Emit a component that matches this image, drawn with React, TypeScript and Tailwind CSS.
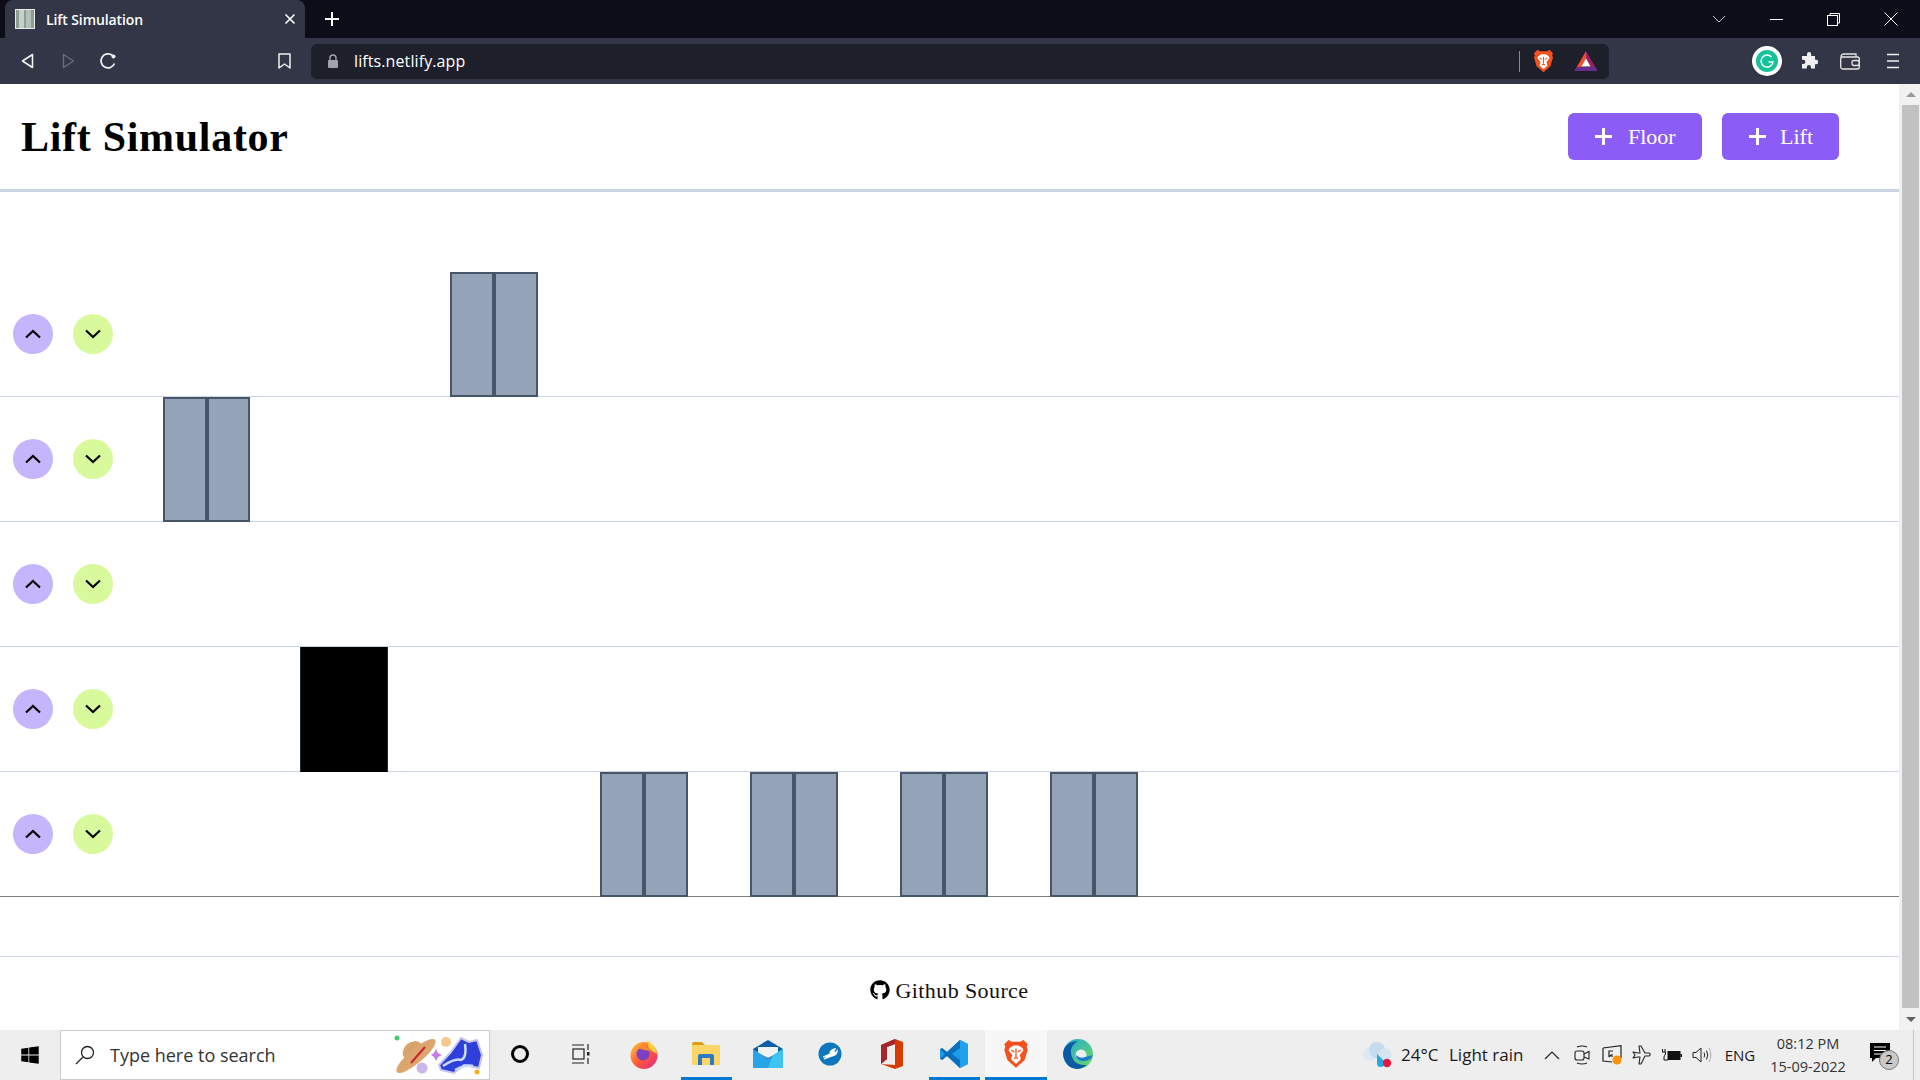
import type { ReactNode } from 'react';
import { FaGithub, FaWindows } from 'react-icons/fa';

const uiFont = "font-['Open_Sans',sans-serif]";
const serif = "font-['Liberation_Serif',serif]";

function Chevron({ up }: { up?: boolean }) {
  return (
    <svg width="16" height="10" viewBox="0 0 16 10" fill="none" stroke="#000" strokeWidth="2.2">
      <path d={up ? 'M1 8.5 L8 2 L15 8.5' : 'M1 1.5 L8 8 L15 1.5'} />
    </svg>
  );
}

function FloorButtons() {
  return (
    <div className="flex h-[124px] items-center gap-[20px] pl-[13px]">
      <button className="flex h-10 w-10 items-center justify-center rounded-full bg-[#c4b5fd]">
        <Chevron up />
      </button>
      <button className="flex h-10 w-10 items-center justify-center rounded-full bg-[#d9f99d]">
        <Chevron />
      </button>
    </div>
  );
}

function Lift({ className = 'w-[88px]' }: { className?: string }) {
  return (
    <div className={`flex h-[125px] shrink-0 ${className}`}>
      <div className="w-1/2 border-2 border-[#475569] bg-[#94a3b8]" />
      <div className="w-1/2 border-2 border-[#475569] bg-[#94a3b8]" />
    </div>
  );
}

function BraveIcon({ size = 22 }: { size?: number }) {
  return (
    <svg width={size} height={size * 1.15} viewBox="0 0 24 28">
      <path d="M5 1 L8 2.5 H16 L19 1 L23 5 L22 7.5 L23 10 L20 20 L12 27 L4 20 L1 10 L2 7.5 L1 5 Z" fill="#f4511e" />
      <path d="M6 8.5 L9.5 6 H14.5 L18 8.5 L19 10.5 L15.5 15 L16.5 19 L12 23.5 L7.5 19 L8.5 15 L5 10.5 Z" fill="#fff" />
      <path d="M7.5 10.5 L10.5 12 M16.5 10.5 L13.5 12 M12 9 V17 M10 18 H14" stroke="#f4511e" strokeWidth="1.2" fill="none" />
    </svg>
  );
}

function BatIcon() {
  return (
    <svg width="24" height="21" viewBox="0 0 24 21">
      <path d="M12 0 L0.5 20 L12 13 Z" fill="#ef4f2c" />
      <path d="M12 0 L23.5 20 L12 13 Z" fill="#9e1f63" />
      <path d="M0.5 20 L3 16 H21 L23.5 20 Z" fill="#662d91" />
      <path d="M12 7.5 L16.5 15.5 H7.5 Z" fill="#fff" />
    </svg>
  );
}

function TabBar() {
  return (
    <div className="flex h-[38px] bg-[#0c0d18] pl-[5px] text-white">
      <div className="flex w-[300px] items-center rounded-t-lg bg-[#333646] pl-[10px]">
        <svg width="20" height="20" viewBox="0 0 20 20">
          <rect width="20" height="20" fill="#e8ece8" />
          <rect x="1" y="1" width="18" height="18" fill="#8e9c94" />
          <rect x="4" y="1" width="5" height="18" fill="#c5d0c8" />
          <rect x="11" y="1" width="5" height="18" fill="#b4c0b8" />
        </svg>
        <span className={`ml-[11px] text-[14px] font-semibold tracking-[-0.1px] whitespace-nowrap ${uiFont}`}>Lift Simulation</span>
        <svg className="ml-auto mr-[9px]" width="12" height="12" viewBox="0 0 12 12" stroke="#fff" strokeWidth="1.6">
          <path d="M1.5 1.5 L10.5 10.5 M10.5 1.5 L1.5 10.5" />
        </svg>
      </div>
      <div className="flex w-[54px] items-center justify-center">
        <svg width="16" height="16" viewBox="0 0 16 16" stroke="#fff" strokeWidth="2">
          <path d="M8 1 V15 M1 8 H15" />
        </svg>
      </div>
      <div className="ml-auto flex">
        <div className="flex w-[57.5px] items-center justify-center">
          <svg width="14" height="8" viewBox="0 0 14 8" fill="none" stroke="#c8c8c8">
            <path d="M1 1 L7 7 L13 1" />
          </svg>
        </div>
        <div className="flex w-[57.5px] items-center justify-center">
          <div className="h-px w-[13px] bg-white" />
        </div>
        <div className="flex w-[57.5px] items-center justify-center">
          <svg width="13" height="13" viewBox="0 0 13 13" fill="none" stroke="#fff">
            <path d="M3 2.5 V0.5 H12.5 V10 H10.5" />
            <rect x="0.5" y="2.5" width="10" height="10" />
          </svg>
        </div>
        <div className="flex w-[57.5px] items-center justify-center">
          <svg width="14" height="14" viewBox="0 0 14 14" stroke="#fff" strokeWidth="1">
            <path d="M0.5 0.5 L13.5 13.5 M13.5 0.5 L0.5 13.5" />
          </svg>
        </div>
      </div>
    </div>
  );
}

function ToolSlot({ children }: { children: ReactNode }) {
  return <div className="flex h-full w-10 items-center justify-center">{children}</div>;
}

function Toolbar() {
  return (
    <div className="flex h-[46px] items-center bg-[#333646] pl-[7px]">
      <ToolSlot>
        <svg width="13" height="16" viewBox="0 0 13 16" fill="none" stroke="#f2f2f2" strokeWidth="1.6" strokeLinejoin="round">
          <path d="M11.5 1.5 V14.5 L1.5 8 Z" />
        </svg>
      </ToolSlot>
      <div className="ml-[1px]">
        <ToolSlot>
          <svg width="13" height="16" viewBox="0 0 13 16" fill="none" stroke="#6b6d7a" strokeWidth="1.4" strokeLinejoin="round">
            <path d="M1.5 1.5 V14.5 L11.5 8 Z" />
          </svg>
        </ToolSlot>
      </div>
      <ToolSlot>
        <svg width="18" height="18" viewBox="0 0 18 18" fill="none" stroke="#f2f2f2" strokeWidth="1.7">
          <path d="M15.5 11.5 A7 7 0 1 1 13.5 3.5" />
          <circle cx="14.5" cy="4.5" r="2" fill="#f2f2f2" stroke="none" />
        </svg>
      </ToolSlot>
      <div className="ml-[136px]">
        <ToolSlot>
          <svg width="13" height="16" viewBox="0 0 13 16" fill="none" stroke="#f2f2f2" strokeWidth="1.5" strokeLinejoin="round">
            <path d="M1 1 H12 V15 L6.5 11 L1 15 Z" />
          </svg>
        </ToolSlot>
      </div>
      <div className="ml-[7px] flex h-[35px] w-[1298px] items-center rounded-md bg-[#1d1f2a] pl-[16px] pr-[11px]">
        <svg width="12" height="14" viewBox="0 0 12 14">
          <path d="M3 6 V4 A3 3 0 0 1 9 4 V6" fill="none" stroke="#a0a2ad" strokeWidth="1.4" />
          <rect x="1" y="6" width="10" height="8" rx="1" fill="#a0a2ad" />
        </svg>
        <span className={`ml-[15px] text-[16px] tracking-[0.1px] whitespace-nowrap text-white ${uiFont}`}>lifts.netlify.app</span>
        <div className="ml-auto h-[21px] w-px bg-[#8a8a8a]" />
        <div className="ml-[13px]">
          <BraveIcon size={21} />
        </div>
        <div className="ml-[20px]">
          <BatIcon />
        </div>
      </div>
      <div className="ml-[137px] flex h-full">
        <div className="flex w-[42px] items-center justify-center">
          <div className="flex h-[30px] w-[30px] items-center justify-center rounded-full bg-white shadow">
            <svg width="22" height="22" viewBox="0 0 22 22">
              <circle cx="11" cy="11" r="11" fill="#15c39a" />
              <path d="M15.5 7 A6 6 0 1 0 17 12 H12.5" fill="none" stroke="#fff" strokeWidth="1.4" />
            </svg>
          </div>
        </div>
        <div className="flex w-[41px] items-center justify-center">
          <svg width="18" height="18" viewBox="0 0 18 18" fill="#f0f0f0">
            <path d="M7 2.2 a2.1 2.1 0 0 1 4.2 0 V4 H15 V7.8 h1 a2.2 2.2 0 0 1 0 4.4 H15 V16.5 H11 v-1.5 a2.1 2.1 0 0 0 -4.2 0 V16.5 H2 V12 h1.3 a2.1 2.1 0 0 0 0 -4.2 H2 V4 H7 Z" />
          </svg>
        </div>
        <div className="flex w-[42px] items-center justify-center">
          <svg width="20" height="17" viewBox="0 0 20 17" fill="none" stroke="#e6e6e6" strokeWidth="1.3">
            <path d="M1 4 Q1 1 4 1 H16 V4" />
            <rect x="0.7" y="4" width="18.6" height="12" rx="2" />
            <rect x="12" y="7.5" width="7.3" height="5" rx="2" />
          </svg>
        </div>
        <div className="flex w-[43px] items-center justify-center">
          <svg width="12" height="16" viewBox="0 0 12 16" stroke="#f2f2f2" strokeWidth="1.4">
            <path d="M0 1.5 H12 M0 8 H12 M0 14.5 H12" />
          </svg>
        </div>
      </div>
    </div>
  );
}

function AddButton({ label, className, gap }: { label: string; className: string; gap: string }) {
  return (
    <button className={`flex h-[47px] items-center rounded-md bg-[#8b5cf6] pl-[27px] text-[22px] text-white ${serif} ${className}`}>
      <svg width="17" height="17" viewBox="0 0 17 17" stroke="#fff" strokeWidth="3">
        <path d="M8.5 0 V17 M0 8.5 H17" />
      </svg>
      <span className={gap}>{label}</span>
    </button>
  );
}

function Page() {
  return (
    <div className="flex h-[946px]">
      <div className="flex w-[1899px] flex-col">
        <header className="flex h-[108px] items-center border-b-[3px] border-[#cbd5e1] pl-[21px] pr-[60px]">
          <h1 className={`pt-[2px] text-[42px] font-bold tracking-[0.7px] whitespace-nowrap text-black ${serif}`}>Lift Simulator</h1>
          <div className="ml-auto flex gap-[20px]">
            <AddButton label="Floor" className="w-[134px]" gap="ml-[16px]" />
            <AddButton label="Lift" className="w-[117px]" gap="ml-[14px]" />
          </div>
        </header>
        <div className="pt-[80px]">
          <div className="flex h-[125px] border-b border-[#cbd5e1]">
            <FloorButtons />
            <Lift className="ml-[337px] w-[88px]" />
          </div>
          <div className="flex h-[125px] border-b border-[#cbd5e1]">
            <FloorButtons />
            <Lift className="ml-[50px] w-[87px]" />
          </div>
          <div className="flex h-[125px] border-b border-[#cbd5e1]">
            <FloorButtons />
          </div>
          <div className="flex h-[125px] border-b border-[#cbd5e1]">
            <FloorButtons />
            <div className="ml-[187px] h-[125px] w-[88px] shrink-0 border-x border-[#1f2937] bg-black" />
          </div>
          <div className="flex h-[125px] border-b border-[#808080]">
            <FloorButtons />
            <div className="ml-[487px] flex gap-[62px]">
              <Lift />
              <Lift />
              <Lift />
              <Lift />
            </div>
          </div>
        </div>
        <footer className={`mt-[59px] flex h-[74px] items-center justify-center gap-[6px] border-t border-[#cbd5e1] pb-[7px] pr-[1px] text-[22px] tracking-[0.4px] text-[#111] ${serif}`}>
          <FaGithub className="text-[20px] text-black" />
          <span>Github Source</span>
        </footer>
      </div>
      <div className="flex w-[21px] flex-col border-l-2 border-[#f1f1f1] bg-[#f1f1f1]">
        <div className="flex h-[21px] items-center justify-center">
          <div className="h-0 w-0 border-x-[5px] border-b-[5px] border-x-transparent border-b-[#9a9a9a]" />
        </div>
        <div className="mx-auto h-[903px] w-[17px] bg-[#c1c1c1]" />
        <div className="flex h-[22px] items-center justify-center">
          <div className="h-0 w-0 border-x-[5px] border-t-[5px] border-x-transparent border-t-[#606060]" />
        </div>
      </div>
    </div>
  );
}

function TaskSlot({ children, active, focused }: { children: ReactNode; active?: boolean; focused?: boolean }) {
  return (
    <div className={`flex h-full w-[62px] flex-col items-center ${focused ? 'bg-[#f7f7f7]' : ''}`}>
      <div className="flex flex-1 items-center justify-center pt-[1px]">{children}</div>
      <div className={`h-[3px] ${focused ? 'w-full' : 'w-[51px]'} ${active ? 'bg-[#0078d4]' : ''}`} />
    </div>
  );
}

function TaskIcons() {
  return (
    <div className="ml-[-1px] flex h-full">
      <TaskSlot>
        <div className="h-[18px] w-[18px] rounded-full border-[3px] border-black" />
      </TaskSlot>
      <TaskSlot>
        <svg width="20" height="20" viewBox="0 0 20 20" fill="none" stroke="#222" strokeWidth="1.2">
          <path d="M0 1 H12 M0 19 H12 M16 0 V6 M16 14 V20" />
          <rect x="1" y="5" width="11" height="10" />
          <rect x="15" y="8" width="2.5" height="3.5" fill="#222" stroke="none" />
        </svg>
      </TaskSlot>
      <TaskSlot>
        <svg width="30" height="30" viewBox="0 0 30 30">
          <defs>
            <linearGradient id="ff" x1="0" y1="0" x2="1" y2="1">
              <stop offset="0" stopColor="#ffcc33" />
              <stop offset="0.5" stopColor="#ff5a36" />
              <stop offset="1" stopColor="#e3268c" />
            </linearGradient>
          </defs>
          <circle cx="15" cy="16.5" r="13.5" fill="url(#ff)" />
          <path d="M18 1 Q27 7 28 15 L20 10 Z" fill="#ffd43b" />
          <circle cx="14" cy="15" r="6.5" fill="#7b3fc4" />
          <path d="M9 9 Q15 5 21 12 L15 11 Z" fill="#ff8a2b" />
        </svg>
      </TaskSlot>
      <TaskSlot active>
        <svg width="28" height="24" viewBox="0 0 28 24">
          <path d="M0 2 Q0 0 2 0 H10 L13 3 H0 Z" fill="#d9a016" />
          <path d="M0 3 H28 V22 Q28 23 27 23 H1 Q0 23 0 22 Z" fill="#fbd566" />
          <path d="M6 23 V14 Q6 12 8 12 H20 Q22 12 22 14 V23 H18 V16 H10 V23 Z" fill="#2f78c4" />
        </svg>
      </TaskSlot>
      <TaskSlot>
        <svg width="30" height="28" viewBox="0 0 30 28">
          <path d="M15 0 L30 9 V28 H0 V9 Z" fill="#0b5fa8" />
          <path d="M5 7 H25 V13 L15 18 L5 13 Z" fill="#f2f2f2" />
          <path d="M0 9 L15 19 L30 9 V28 H0 Z" fill="#27a5e8" />
          <path d="M30 9 V28 H15 L20 15 Z" fill="#3fc4f0" />
        </svg>
      </TaskSlot>
      <TaskSlot>
        <svg width="24" height="24" viewBox="0 0 24 24">
          <circle cx="12" cy="12" r="11.5" fill="#0f76bd" />
          <path d="M5 15 L12 12 M12 12 Q12 8 17 7 L15.5 9.5 L17.5 11 L19 9 Q19 13 14 14 L6 17 Z" stroke="#fff" strokeWidth="1.3" fill="#fff" />
        </svg>
      </TaskSlot>
      <TaskSlot>
        <svg width="24" height="30" viewBox="0 0 24 30">
          <path d="M15 0 L23 3 V27 L15 30 L1 25 L15 26 V5 L7 8 V20 L1 25 V6 Z" fill="#d83b01" />
          <path d="M15 0 V5 L7 8 V20 L1 25 V6 Z" fill="#a4262c" />
        </svg>
      </TaskSlot>
      <TaskSlot active>
        <svg width="30" height="30" viewBox="0 0 30 30">
          <path d="M21 1 L29 5 V25 L21 29 L8 17 L3 21 L1 19.5 V10.5 L3 9 L8 13 Z" fill="#1a9ee8" />
          <path d="M21 1 V29 L8 17 L3 21 L1 19.5 L6 15 L1 10.5 L3 9 L8 13 Z M21 9 L13 15 L21 21 Z" fill="#0a70bb" />
          <path d="M21 1 L29 5 V25 L21 29 Z" fill="#1fa2ee" />
        </svg>
      </TaskSlot>
      <TaskSlot active focused>
        <BraveIcon size={26} />
      </TaskSlot>
      <TaskSlot>
        <svg width="30" height="30" viewBox="0 0 30 30">
          <defs>
            <linearGradient id="ed" x1="0" y1="0" x2="1" y2="1">
              <stop offset="0" stopColor="#1fa8d8" />
              <stop offset="1" stopColor="#6fdc5c" />
            </linearGradient>
          </defs>
          <circle cx="15" cy="15" r="15" fill="url(#ed)" />
          <path d="M0 15 Q1 3 15 2 Q5 8 9 18 Q12 27 24 26 Q18 30 14 30 Q2 29 0 15 Z" fill="#0c59a4" />
          <circle cx="18" cy="16" r="5.5" fill="#eeeeee" />
          <path d="M30 16 Q28 22 20 22 Q13 22 13 16 Q17 20 22 18 Z" fill="#1d7ec9" />
        </svg>
      </TaskSlot>
    </div>
  );
}

function TraySlot({ children }: { children: ReactNode }) {
  return <div className="flex h-full w-[30px] items-center justify-center">{children}</div>;
}

function Tray() {
  return (
    <div className={`ml-auto flex h-full items-center text-[#1a1a1a] ${uiFont}`}>
      <svg width="30" height="28" viewBox="0 0 30 28">
        <circle cx="8" cy="13" r="7" fill="#dbe9f4" />
        <circle cx="15" cy="9" r="8" fill="#c6dcee" />
        <circle cx="23" cy="14" r="6.5" fill="#d5e5f2" />
        <path d="M15 13 L24 22 Q22 26 18.5 26 Q15 26 15 22 Z" fill="#28a8e0" />
        <circle cx="25" cy="22" r="4.2" fill="#e6173f" />
      </svg>
      <span className="ml-[9px] w-[48px] text-[17px] whitespace-nowrap">24°C</span>
      <span className="w-[88px] text-[17px] whitespace-nowrap">Light rain</span>
      <TraySlot>
        <svg width="16" height="9" viewBox="0 0 16 9" fill="none" stroke="#222" strokeWidth="1.2">
          <path d="M1 8 L8 1 L15 8" />
        </svg>
      </TraySlot>
      <TraySlot>
        <svg width="16" height="20" viewBox="0 0 16 20" fill="none" stroke="#222" strokeWidth="1.1">
          <path d="M3 2 Q8 0 13 2 M3 18 Q8 20 13 18" />
          <rect x="1" y="6" width="9" height="9" rx="2" />
          <path d="M10 9 L15 6.5 V14 L10 12" />
        </svg>
      </TraySlot>
      <TraySlot>
        <svg width="20" height="20" viewBox="0 0 20 20" fill="none" stroke="#222" strokeWidth="1.2">
          <path d="M1 3 L19 0.7 V13 M1 3 V16 L10 17" />
          <path d="M11 6 H7 V12 M7 12 L9 10 M10 9 V12" />
          <circle cx="15" cy="15" r="4.5" fill="#f7930e" stroke="none" />
        </svg>
      </TraySlot>
      <TraySlot>
        <svg width="20" height="20" viewBox="0 0 20 20" fill="none" stroke="#222" strokeWidth="1.1" strokeLinejoin="round">
          <path d="M1 7 L6 8 H8 L7 1 H9 L13 8 H17 Q19.5 9.5 17 11 H13 L9 19 H7 L8 12 H6 L1 13 L3 10 Z" />
        </svg>
      </TraySlot>
      <TraySlot>
        <svg width="20" height="12" viewBox="0 0 20 12">
          <rect x="5.5" y="2" width="13" height="9" fill="#111" />
          <rect x="18.5" y="5" width="1.5" height="3" fill="#111" />
          <path d="M0.5 0 V3 M3 0 V3 M0 3 H3.5 V5 Q2 7 2 8 V11 H6" stroke="#111" strokeWidth="1" fill="none" />
        </svg>
      </TraySlot>
      <TraySlot>
        <svg width="20" height="16" viewBox="0 0 20 16" fill="none" stroke="#222" strokeWidth="1">
          <path d="M1 5.5 H4 L9 1 V15 L4 10.5 H1 Z" />
          <path d="M12 5.5 Q13.5 8 12 10.5" />
          <path d="M14.5 3.5 Q17 8 14.5 12.5" />
          <path d="M17 1 Q20.5 8 17 15" stroke="#aaa" />
        </svg>
      </TraySlot>
      <div className="flex h-full w-[46px] items-center justify-center text-[15px]">ENG</div>
      <div className="flex h-full w-[90px] flex-col items-center justify-center gap-[3px] text-[14.5px] leading-[20px] whitespace-nowrap text-[#333]">
        <span>08:12 PM</span>
        <span>15-09-2022</span>
      </div>
      <div className="flex h-full w-[54px] items-center justify-center">
        <div className="relative h-[24px] w-[20px]">
          <svg width="20" height="20" viewBox="0 0 20 20">
            <path d="M0 0 H20 V15 H6 L2 19 V15 H0 Z" fill="#000" />
            <path d="M4 4 H16 M4 7.5 H16 M4 11 H16" stroke="#fff" strokeWidth="1" />
          </svg>
          <div className="absolute left-[9px] top-[7px] flex h-[20px] w-[20px] items-center justify-center rounded-full border border-[#777] bg-[#c9c9c9] text-[13px] text-black">
            2
          </div>
        </div>
      </div>
      <div className="flex h-full w-[13px] justify-center">
        <div className="h-full w-px bg-[#c4c4c4]" />
      </div>
    </div>
  );
}

function Taskbar() {
  return (
    <div className="flex h-[50px] bg-[#eeeeee]">
      <div className="flex w-[60px] items-center justify-center">
        <FaWindows className="text-[20px] text-black" />
      </div>
      <div className={`flex h-full w-[430px] items-center border border-[#cccccc] bg-white pl-[14px] ${uiFont}`}>
        <svg width="20" height="20" viewBox="0 0 20 20" fill="none" stroke="#222" strokeWidth="1.3">
          <circle cx="12.5" cy="7.5" r="6" />
          <path d="M8 12 L1 19" />
        </svg>
        <span className="ml-[15px] text-[18px] whitespace-nowrap text-[#333]">Type here to search</span>
        <svg className="ml-auto" width="100" height="48" viewBox="0 1 100 48">
          <circle cx="8" cy="8" r="2.5" fill="#3ecf6e" />
          <ellipse cx="24" cy="21" rx="11" ry="9" fill="#d9a46c" transform="rotate(-40 24 21)" />
          <ellipse cx="27" cy="26" rx="25" ry="7" fill="#dba76e" transform="rotate(-40 27 26)" />
          <path d="M22 33 L36 17" stroke="#c6262e" strokeWidth="2" />
          <path d="M47 19 L49 23 L53 25 L49 27 L47 31 L45 27 L42 25 L45 23 Z" fill="#c77be8" />
          <circle cx="57" cy="12" r="5" fill="#f5c98c" />
          <circle cx="33" cy="38" r="5.5" fill="#c9b8ea" />
          <path d="M50 35 L62 22 L72 8 L80 12 L88 10 L93 25 L90 38 L75 35 L65 43 L52 40 Z" fill="#2f3fdc" stroke="#c9c4ef" strokeWidth="2" strokeLinejoin="round" />
          <path d="M54 36 Q66 28 72 30 Q78 28 76 14 M66 40 Q78 34 84 36" stroke="#c9dcfb" strokeWidth="2.5" fill="none" />
          <circle cx="88" cy="42" r="2.5" fill="#fbb016" />
        </svg>
      </div>
      <TaskIcons />
      <Tray />
    </div>
  );
}

export default function App() {
  return (
    <div className="h-[1080px] w-[1920px] overflow-hidden bg-white">
      <TabBar />
      <Toolbar />
      <Page />
      <Taskbar />
    </div>
  );
}
